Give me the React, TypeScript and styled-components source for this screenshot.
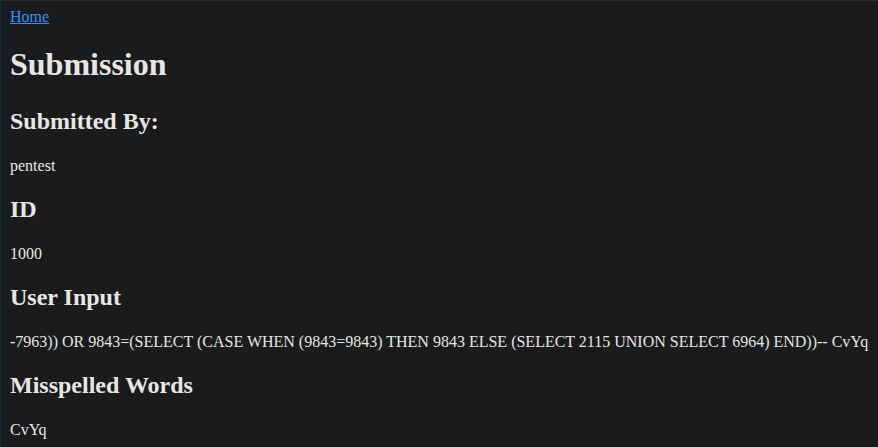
import styled, { createGlobalStyle } from "styled-components";

const GlobalStyle = createGlobalStyle`
  html, body {
    margin: 0;
    padding: 0;
    background: #1a1b1d;
  }
  #root {
    min-height: 100vh;
  }
`;

const Frame = styled.div`
  min-height: 100vh;
  box-sizing: border-box;
  border-top: 1px solid #2c2d2f;
  border-left: 1px solid #0b3136;
  padding: 7px 9px;
  color: #e8e6e3;
  font-family: "Liberation Serif", "Times New Roman", serif;
  font-size: 16px;
`;

const HomeLink = styled.a`
  color: #3391ff;
  text-decoration: underline;
`;

const Title = styled.h1`
  font-size: 32px;
  font-weight: bold;
  margin: 20px 0 25px;
`;

const SectionHeading = styled.h2`
  font-size: 24px;
  font-weight: bold;
  margin: 21px 0 22px;
`;

const Value = styled.p`
  margin: 16px 0;
  white-space: nowrap;
`;

const sections = [
  { label: "Submitted By:", value: "pentest" },
  { label: "ID", value: "1000" },
  {
    label: "User Input",
    value:
      "-7963)) OR 9843=(SELECT (CASE WHEN (9843=9843) THEN 9843 ELSE (SELECT 2115 UNION SELECT 6964) END))-- CvYq",
  },
  { label: "Misspelled Words", value: "CvYq" },
];

const App = () => {
  return (
    <>
      <GlobalStyle />
      <Frame>
        <HomeLink href="#">Home</HomeLink>
        <Title>Submission</Title>
        {sections.map((s) => (
          <section key={s.label}>
            <SectionHeading>{s.label}</SectionHeading>
            <Value>{s.value}</Value>
          </section>
        ))}
      </Frame>
    </>
  );
};

export default App;
